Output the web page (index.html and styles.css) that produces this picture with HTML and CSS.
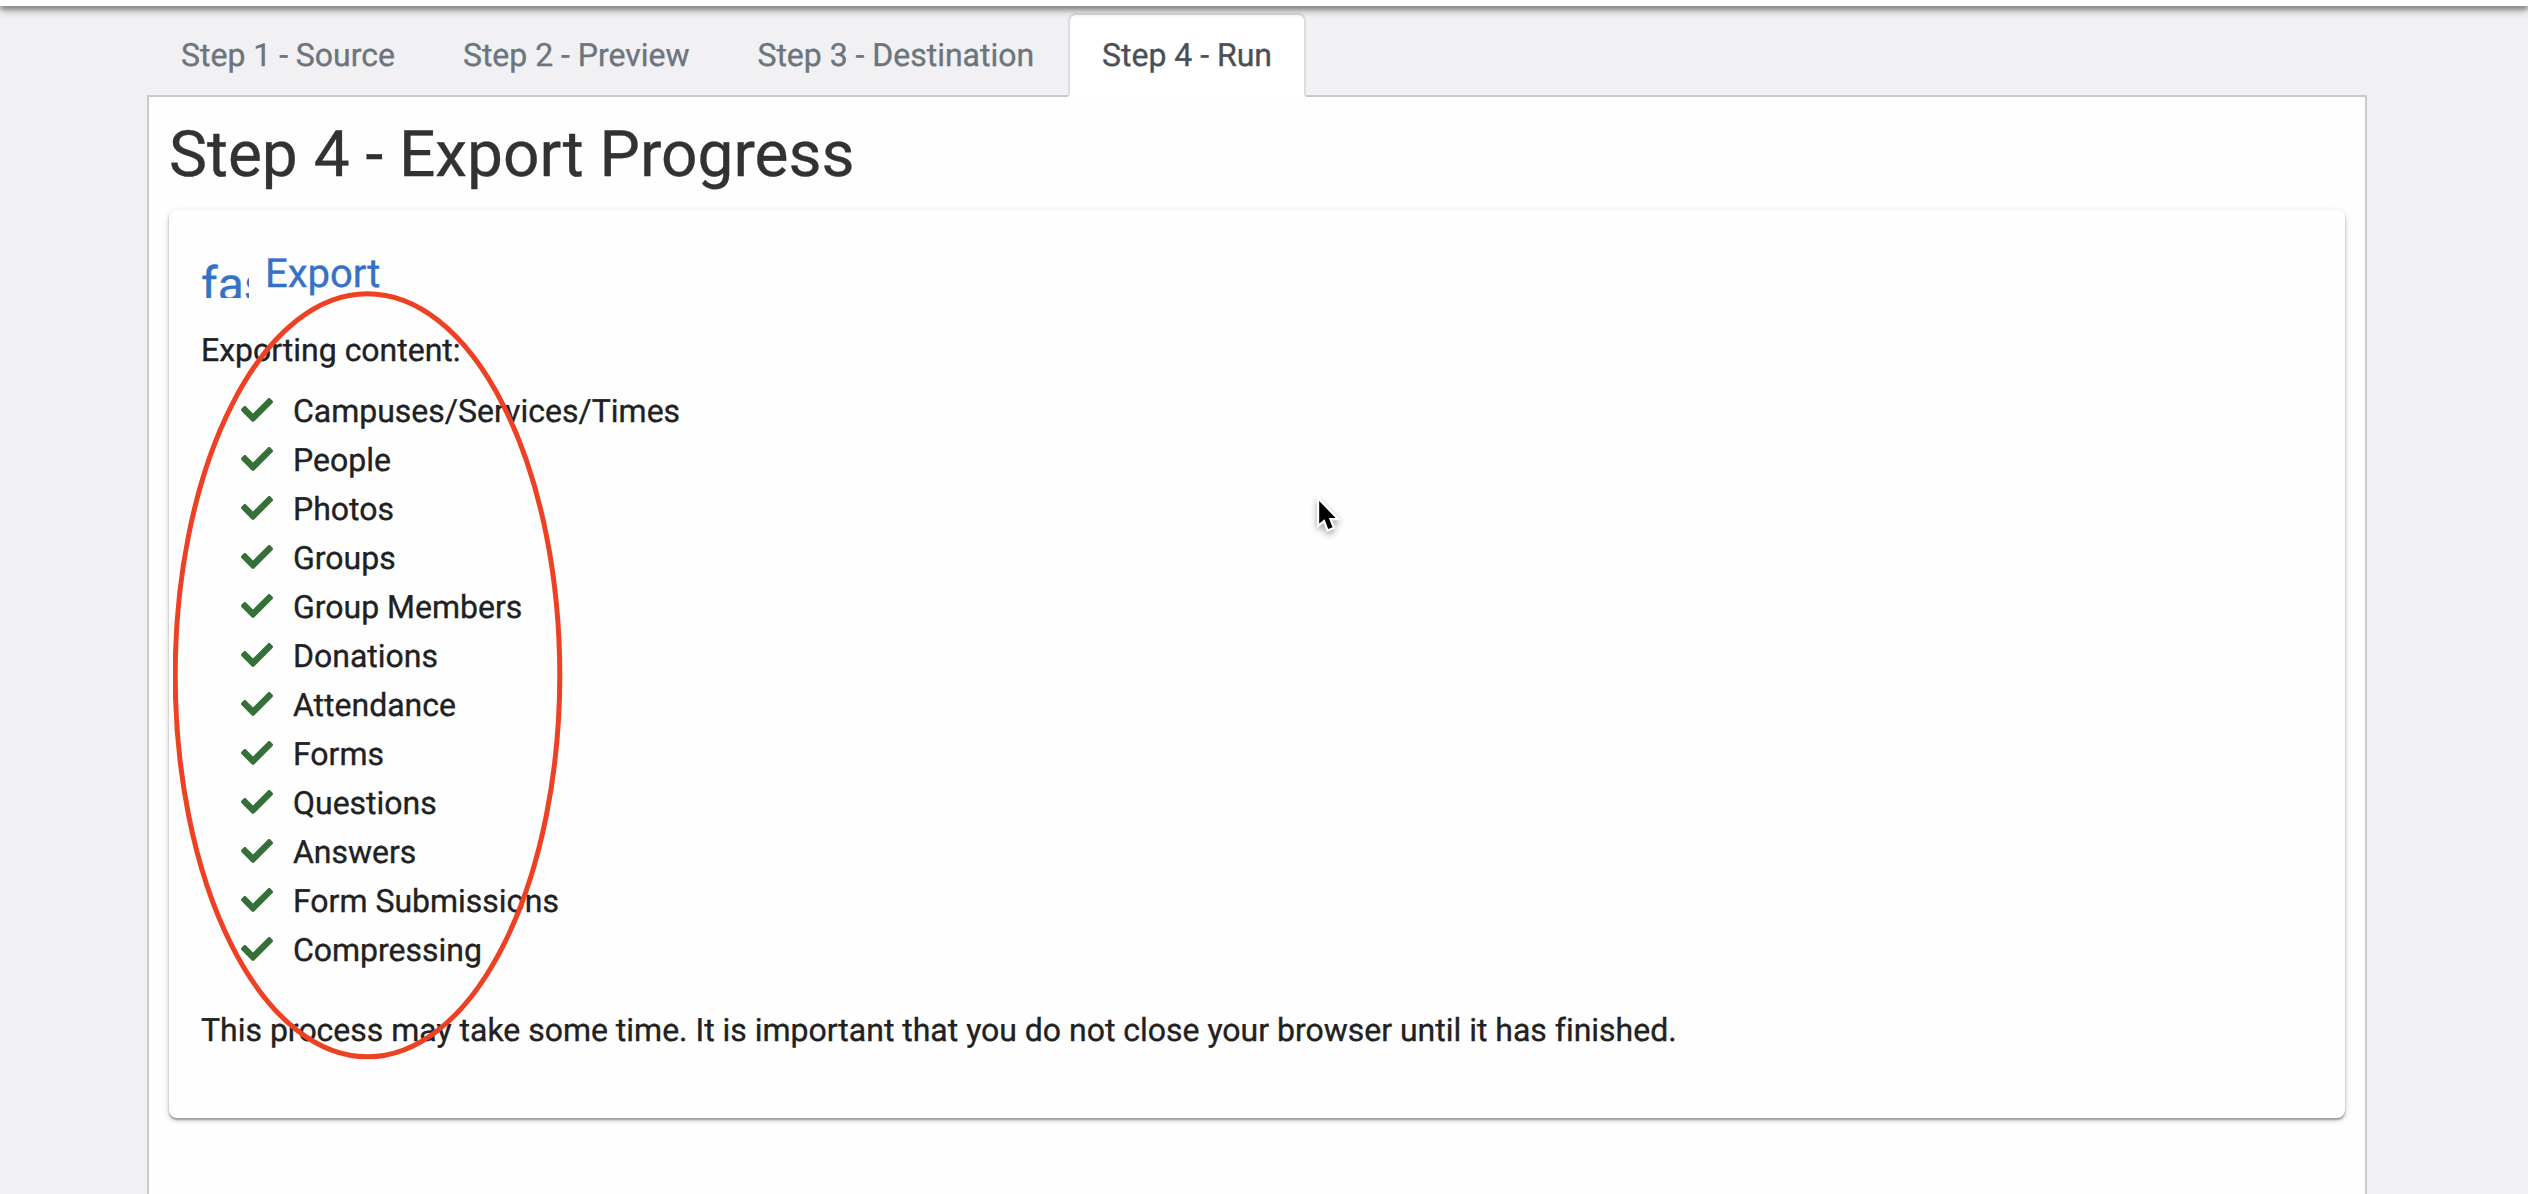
FILE: index.html
```html
<!DOCTYPE html>
<html lang="en">
<head>
<meta charset="utf-8">
<title>Export</title>
<link rel="stylesheet" href="styles.css">
</head>
<body>
<svg class="symbols" aria-hidden="true">
  <symbol id="check" viewBox="0 0 512 512"><path d="M173.898 439.404l-166.4-166.4c-9.997-9.997-9.997-26.206 0-36.204l36.203-36.204c9.997-9.998 26.207-9.998 36.204 0L192 312.69 432.095 72.596c9.997-9.997 26.207-9.997 36.204 0l36.203 36.204c9.997 9.997 9.997 26.206 0 36.204l-294.4 294.401c-9.998 9.997-26.207 9.997-36.204-.001z"/></symbol>
</svg>
<header class="topbar"></header>
<main class="wizard">
  <nav class="tabs">
    <a class="tab">Step 1 - Source</a>
    <a class="tab">Step 2 - Preview</a>
    <a class="tab">Step 3 - Destination</a>
    <a class="tab active">Step 4 - Run</a>
  </nav>
  <section class="panel">
    <h1>Step 4 - Export Progress</h1>
    <div class="card">
      <div class="card-title"><span class="icon">fas</span><span class="title">Export</span></div>
      <p class="intro">Exporting content:</p>
      <ul class="steps">
        <li><svg class="check"><use href="#check"/></svg>Campuses/Services/Times</li>
        <li><svg class="check"><use href="#check"/></svg>People</li>
        <li><svg class="check"><use href="#check"/></svg>Photos</li>
        <li><svg class="check"><use href="#check"/></svg>Groups</li>
        <li><svg class="check"><use href="#check"/></svg>Group Members</li>
        <li><svg class="check"><use href="#check"/></svg>Donations</li>
        <li><svg class="check"><use href="#check"/></svg>Attendance</li>
        <li><svg class="check"><use href="#check"/></svg>Forms</li>
        <li><svg class="check"><use href="#check"/></svg>Questions</li>
        <li><svg class="check"><use href="#check"/></svg>Answers</li>
        <li><svg class="check"><use href="#check"/></svg>Form Submissions</li>
        <li><svg class="check"><use href="#check"/></svg>Compressing</li>
      </ul>
      <p class="note">This process may take some time. It is important that you do not close your browser until it has finished.</p>
    </div>
  </section>
</main>
<svg class="annotation" viewBox="0 0 390 770"><ellipse cx="194.5" cy="385.3" rx="192.3" ry="381.5"/></svg>
<svg class="pointer" viewBox="0 0 24 36"><path d="M3.2 2V24.5L8.5 20.2L12.2 30L16.6 28.2L12.8 18.9H19.6Z"/></svg>
</body>
</html>
```
FILE: styles.css
```css
* { box-sizing: border-box; }
body {
  margin: 0;
  height: 1194px;
  overflow: hidden;
  position: relative;
  display: flex;
  flex-direction: column;
  background: #f1f1f4;
  color: #212121;
  font: 32px/48px Roboto, sans-serif;
  letter-spacing: -.01px;
  text-rendering: geometricPrecision;
  -webkit-text-stroke: .35px currentColor;
}
h1, p, ul { margin: 0; padding: 0; font-weight: 400; }
.symbols { display: none; }
.topbar {
  position: relative;
  z-index: 1;
  flex: none;
  height: 6px;
  background: #fff;
  box-shadow: 0 4px 8px rgba(0, 0, 0, .4), 0 3px 4px rgba(0, 0, 0, .3);
}
.wizard {
  flex: 1;
  display: flex;
  flex-direction: column;
  width: 2220px;
  margin: 7px 0 0 147px;
}
.tabs { display: flex; letter-spacing: -.02px; }
.tab {
  padding: 16px 32px;
  border: 2px solid transparent;
  border-radius: 8px 8px 0 0;
  color: #6c757d;
}
.tab.active {
  position: relative;
  color: #495057;
  background: #fff;
  border-color: #dcdce2 #dcdce2 #fff;
}
.panel {
  flex: 1;
  margin-top: -2px;
  padding: 19px 20px 0;
  background: #fefefe;
  border: 2px solid #c9cacc;
  border-bottom: 0;
}
h1 { font-size: 64px; line-height: 77px; color: #323232; margin-bottom: 17px; }
.card {
  height: 908px;
  padding: 32px;
  border-radius: 8px;
  background: #fefefe;
  box-shadow: 0 2px 2px rgba(0, 0, 0, .3), 0 2px 6px rgba(0, 0, 0, .2);
}
.card-title { display: flex; gap: 16px; color: #3572c6; }
.icon { width: 48px; height: 48px; margin-top: 8px; font-size: 48px; line-height: 70px; overflow: hidden; }
.title { font-size: 40px; line-height: 64px; }
.intro { margin-top: 20px; }
.steps { list-style: none; margin-top: 12px; padding-left: 40px; }
.steps li { display: flex; align-items: center; gap: 20px; height: 49px; }
.check { width: 32px; height: 32px; margin-bottom: 2px; fill: #357038; }
.note { margin-top: 32px; }
.annotation {
  position: absolute;
  left: 173px;
  top: 290px;
  width: 390px;
  height: 770px;
  fill: none;
  stroke: #ee4023;
  stroke-width: 5;
}
.pointer {
  position: absolute;
  left: 1316px;
  top: 499px;
  width: 24px;
  height: 36px;
  overflow: visible;
  fill: #000;
  stroke: #fff;
  stroke-width: 4.5;
  paint-order: stroke;
  filter: drop-shadow(0 3px 3px rgba(0, 0, 0, .35));
}
```
